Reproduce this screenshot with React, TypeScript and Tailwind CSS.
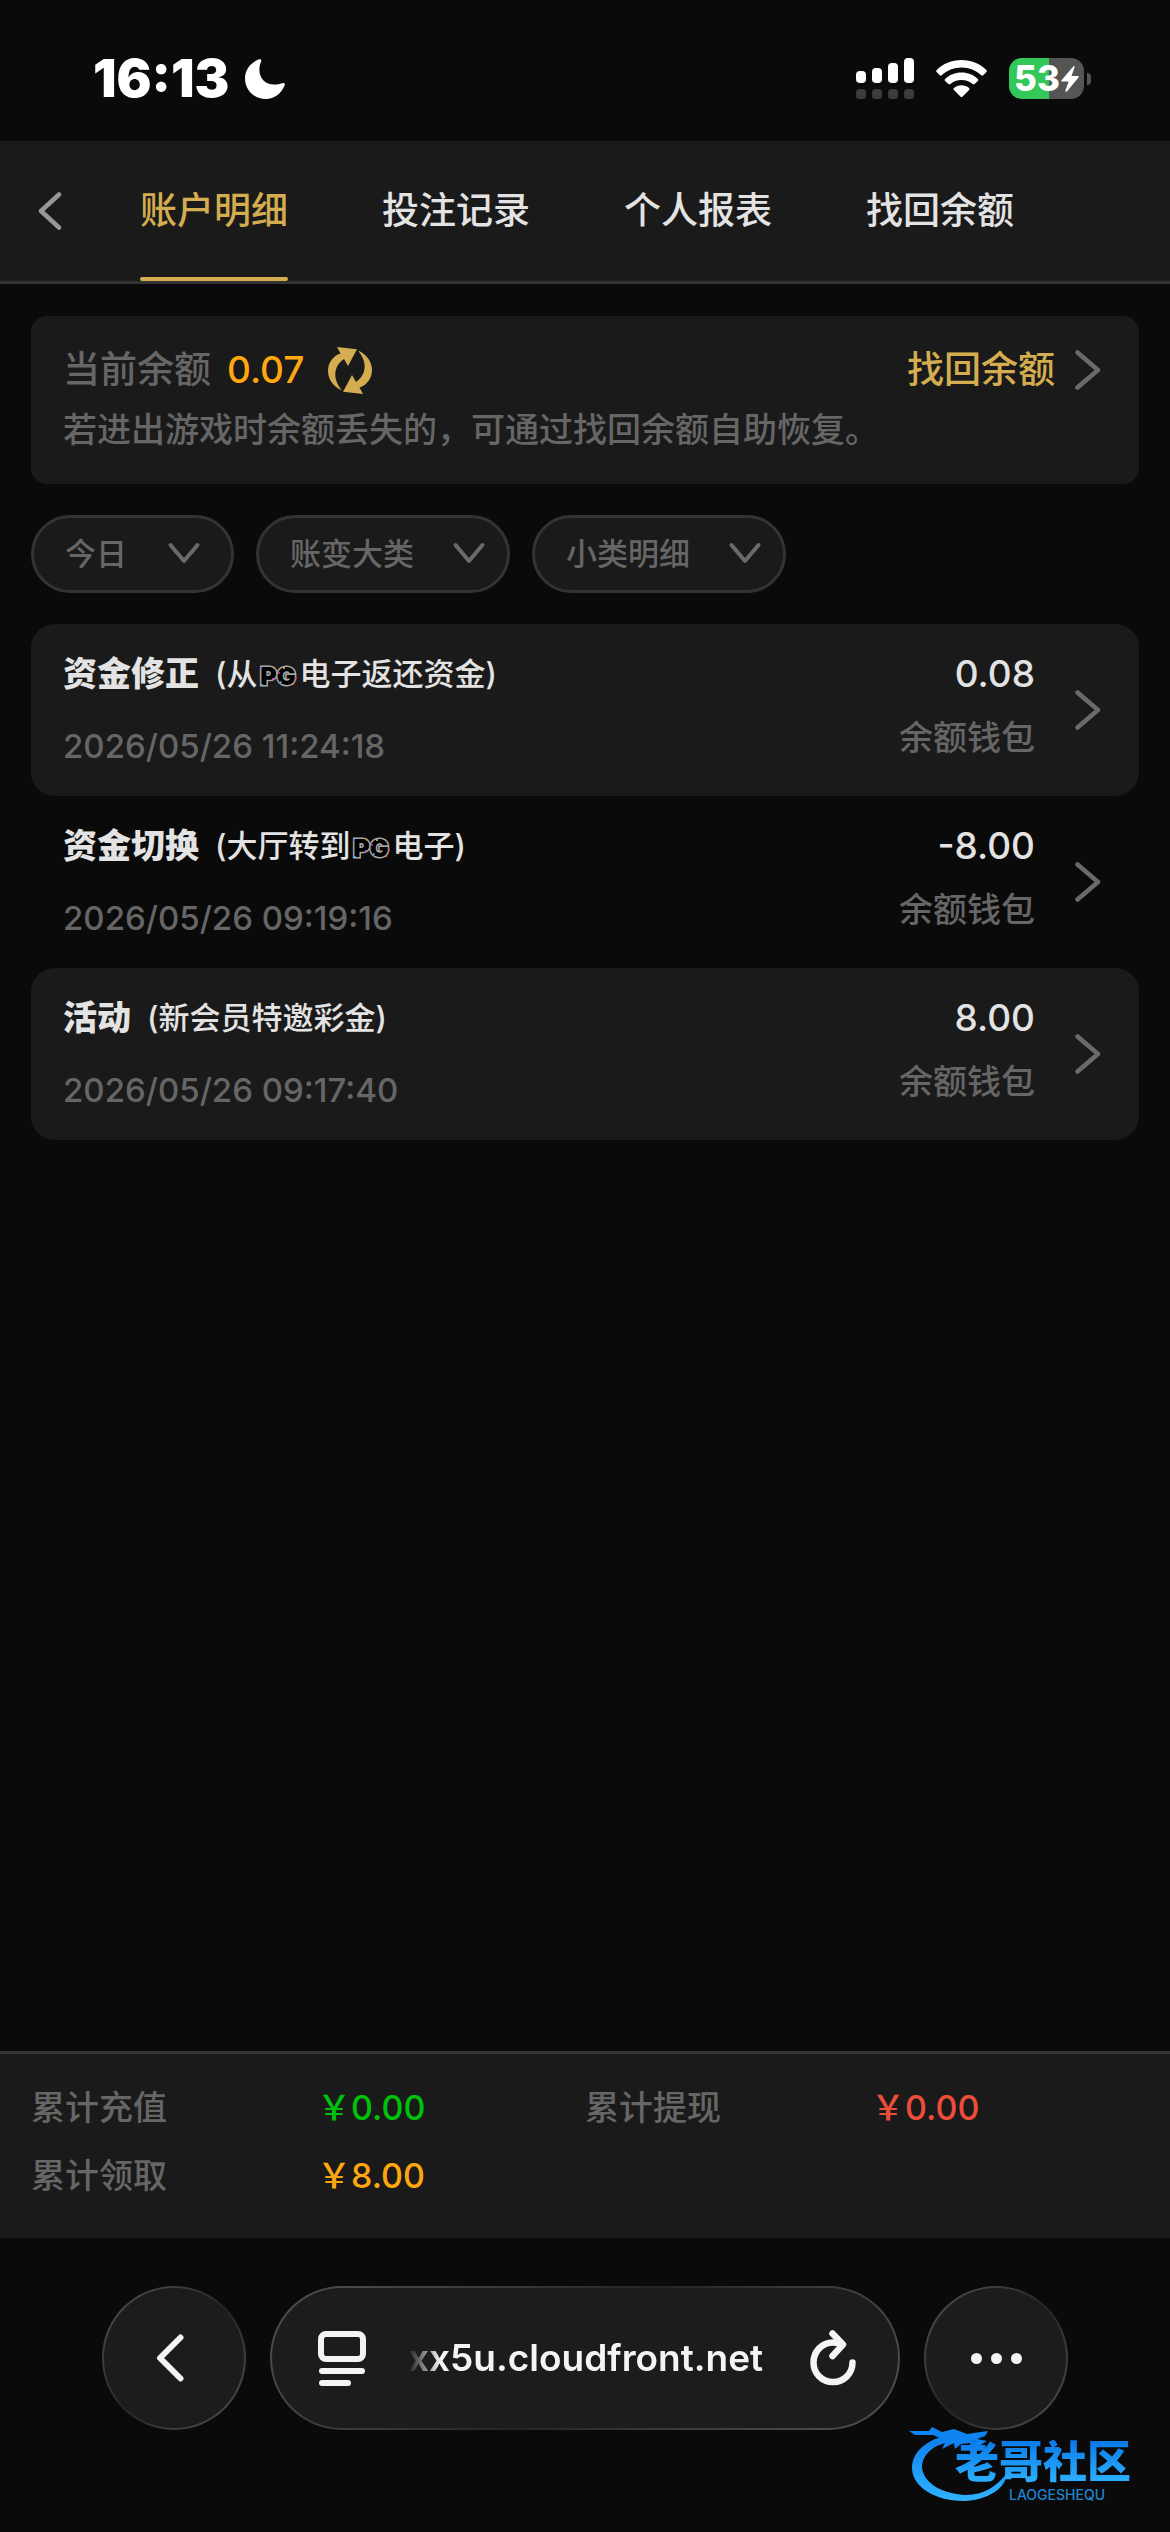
import { ReactNode } from "react";

const tabs = ["账户明细", "投注记录", "个人报表", "找回余额"];

const filters = [
    { label: "今日", box: "w-[203px]", arrow: "right-[32px]" },
    { label: "账变大类", box: "w-[254px]", arrow: "right-[23px]" },
    { label: "小类明细", box: "w-[254px]", arrow: "right-[23px]" },
];

const records = [
    {
        title: "资金修正",
        note: <>(从<PgMark />电子返还资金)</>,
        time: "2026/05/26 11:24:18",
        amount: "0.08",
    },
    {
        title: "资金切换",
        note: <>(大厅转到<PgMark />电子)</>,
        time: "2026/05/26 09:19:16",
        amount: "-8.00",
    },
    {
        title: "活动",
        note: <>(新会员特邀彩金)</>,
        time: "2026/05/26 09:17:40",
        amount: "8.00",
    },
];

const totals = [
    { label: "累计充值", value: "￥0.00", color: "text-[#00c20a]" },
    { label: "累计提现", value: "￥0.00", color: "text-[#ef4d3c]" },
    { label: "累计领取", value: "￥8.00", color: "text-[#ffa70f]" },
];

function PgMark() {
    return (
        <svg viewBox="0 0 42 32" className="inline-block h-8 w-[42px] overflow-visible align-[-7px]" role="img" aria-label="PG">
            <text
                x="21"
                y="25"
                textAnchor="middle"
                fontSize="25"
                fontWeight="900"
                fill="#000"
                stroke="#a8a8a8"
                strokeWidth="3"
                paintOrder="stroke"
                className="font-['Inter',sans-serif]"
            >
                PG
            </text>
            <circle cx="4" cy="8" r="1" fill="#8b4dff" />
            <circle cx="17" cy="8" r="1" fill="#ff7a2e" />
            <circle cx="16" cy="19" r="1" fill="#d94df0" />
            <circle cx="5" cy="25" r="1" fill="#39c8ff" />
            <circle cx="27" cy="8" r="1" fill="#ffc23a" />
            <circle cx="22" cy="13" r="1" fill="#f0308a" />
            <circle cx="24" cy="22" r="1" fill="#3a9dff" />
            <circle cx="39" cy="18" r="1" fill="#ff3a3a" />
            <circle cx="36" cy="24" r="1" fill="#ff7a2e" />
        </svg>
    );
}

function ChevronRight() {
    return (
        <svg viewBox="0 0 40 40" className="h-10 w-10 shrink-0" fill="none" stroke="#6a6a6a" strokeWidth="4.5" strokeLinecap="round" strokeLinejoin="round">
            <path d="M10.500 2.500L31 20L10.500 37.500" />
        </svg>
    );
}

function StatusBar() {
    return (
        <div className="flex h-[141px] items-center justify-between pt-4 pr-[79px] pl-[93px] text-white">
            <div className="flex items-center gap-4">
                <span className="text-[52px] leading-none font-black">16:13</span>
                <svg viewBox="0 0 40 40" className="h-10 w-10" fill="currentColor">
                    <path d="M13.500 0.600C15.500 -0.300 16.800 0.700 16.100 2.600C14.900 5.300 14.400 8 14.400 11C14.400 19.500 20.500 25.500 29 25.500C32 25.500 34.700 25 37.300 24.200C39.300 23.600 40.400 24.800 39.600 26.600C36.300 34.500 29.500 40 20.800 40C9 40 0 31 0 19.600C0 10.800 5.600 3.700 13.500 0.600Z" />
                </svg>
            </div>

            <div className="flex items-center">
                <svg viewBox="0 0 58 42" className="h-[42px] w-[58px]">
                    <g fill="#fff">
                        <rect x="0" y="13" width="10" height="12" rx="4" />
                        <rect x="16" y="10" width="10" height="15" rx="4" />
                        <rect x="32" y="5" width="10" height="20" rx="4" />
                        <rect x="48" y="0" width="10" height="25" rx="4" />
                    </g>
                    <g fill="#3b3b3b">
                        <rect x="0" y="31" width="10" height="10" rx="3.500" />
                        <rect x="16" y="31" width="10" height="10" rx="3.500" />
                        <rect x="32" y="31" width="10" height="10" rx="3.500" />
                        <rect x="48" y="31" width="10" height="10" rx="3.500" />
                    </g>
                </svg>
                <svg viewBox="0 0 51 37" className="ml-[22px] h-[37px] w-[51px]" fill="#fff">
                    <path d="M25.500 0C35.500 0 44 3.800 50.300 9.900C51 10.600 51 11.400 50.400 12L47.200 15.200C46.600 15.800 45.800 15.800 45.200 15.200C40 10.400 33.200 7.400 25.500 7.400S11 10.400 5.800 15.200C5.200 15.800 4.400 15.800 3.800 15.200L0.600 12C0 11.400 0 10.600 0.700 9.900C7 3.800 15.500 0 25.500 0Z" />
                    <path d="M25.500 12.600C32 12.600 37.600 15 41.800 18.900C42.500 19.500 42.500 20.300 41.900 20.900L38.600 24.100C38 24.700 37.300 24.700 36.600 24.100C33.600 21.500 29.800 20 25.500 20S17.400 21.500 14.400 24.100C13.700 24.700 13 24.700 12.400 24.100L9.100 20.900C8.500 20.300 8.500 19.500 9.200 18.900C13.400 15 19 12.600 25.500 12.600Z" />
                    <path d="M25.500 25.300C28.400 25.300 31 26.300 33 27.900C33.700 28.500 33.700 29.200 33.100 29.900L26.600 36.400C25.900 37.100 25.100 37.100 24.400 36.400L17.900 29.900C17.300 29.200 17.300 28.500 18 27.900C20 26.300 22.600 25.300 25.500 25.300Z" />
                </svg>
                <div className="ml-[22px] flex h-[41px] w-[75px] items-center justify-center gap-px rounded-[13px] bg-linear-to-r from-[#34c759] from-54% to-[#555] to-54%">
                    <span className="text-[35px] leading-none font-extrabold">53</span>
                    <svg viewBox="0 0 18 26" className="h-[26px] w-[18px]" fill="#fff">
                        <path d="M12.300 0.500L0.500 14.200C0 15 0.300 15.600 1.100 15.600H7.600L4.400 24.600C4 25.800 5.100 26.300 5.900 25.400L17.500 11.400C18 10.700 17.700 10.100 16.900 10.100H10.500L13.600 1.300C14 0.200 13 -0.300 12.300 0.500Z" />
                    </svg>
                </div>
                <div className="ml-[3px] h-[12px] w-1 rounded-r-full bg-[#555]" />
            </div>
        </div>
    );
}

function GlassPill({ className, children }: { className: string; children: ReactNode }) {
    return (
        <div
            className={`${className} flex h-[144px] items-center rounded-full border-2 border-transparent [background:linear-gradient(#1c1c1c,#1c1c1c)_padding-box,linear-gradient(135deg,#505050,#3a3a3a_30%,#242424_50%,#3a3a3a_70%,#505050)_border-box]`}
        >
            {children}
        </div>
    );
}

function BrowserBar() {
    return (
        <div className="flex gap-6 px-[102px] pt-12 pb-[102px] text-[#f4f4f4]">
            <GlassPill className="w-[144px] shrink-0">
                <button aria-label="后退" className="flex h-full w-full items-center justify-center pr-2">
                    <svg viewBox="0 0 28 48" className="h-12 w-7" fill="none" stroke="currentColor" strokeWidth="6" strokeLinecap="round" strokeLinejoin="round">
                        <path d="M24.500 3.500L4 24L24.500 44.500" />
                    </svg>
                </button>
            </GlassPill>

            <GlassPill className="min-w-0 flex-1 gap-[42px] pr-[42px] pl-[46px]">
                <button aria-label="页面菜单" className="shrink-0">
                    <svg viewBox="0 0 48 56" className="h-14 w-12" fill="none" stroke="currentColor" strokeWidth="6" strokeLinecap="round">
                        <rect x="3" y="4" width="42" height="25" rx="5" />
                        <path d="M4 41H44" />
                        <path d="M4 53H30" />
                    </svg>
                </button>
                <input
                    readOnly
                    aria-label="地址"
                    defaultValue="xx5u.cloudfront.net"
                    className="min-w-0 flex-1 bg-transparent text-[37px] leading-[44px] font-semibold outline-none [mask-image:linear-gradient(to_right,transparent,#000_32px)]"
                />
                <button aria-label="刷新" className="shrink-0">
                    <svg viewBox="0 0 46 56" className="h-14 w-[46px]" fill="none" stroke="currentColor" strokeWidth="6.500" strokeLinecap="round" strokeLinejoin="round">
                        <path d="M32 14.500C29.500 13 26.500 12.500 23 12.500C12 12.500 3.500 21.500 3.500 32.500C3.500 43.500 12 52 23 52C34 52 42.500 43.500 42.500 32.500" />
                        <path d="M22.500 3.500L33 14.500L22.500 26" />
                    </svg>
                </button>
            </GlassPill>

            <GlassPill className="w-[144px] shrink-0">
                <button aria-label="更多" className="flex h-full w-full items-center justify-center gap-[9px]">
                    <span className="size-[11px] rounded-full bg-current" />
                    <span className="size-[11px] rounded-full bg-current" />
                    <span className="size-[11px] rounded-full bg-current" />
                </button>
            </GlassPill>
        </div>
    );
}

function CommunityBadge() {
    return (
        <div className="pointer-events-none absolute right-[14px] bottom-7 h-[78px] w-[247px]">
            <svg viewBox="0 0 100 78" className="absolute top-0 left-0 h-[78px] w-[100px]">
                <defs>
                    <linearGradient id="badge" x1="0" y1="0" x2="0" y2="1">
                        <stop offset="0" stopColor="#0d7df0" />
                        <stop offset="1" stopColor="#2fb4ff" />
                    </linearGradient>
                </defs>
                <path
                    fill="url(#badge)"
                    d="M40 9C18 13 3 26 3 42C3 60 25 75 55 75C78 74 97 63 98 47C88 60 75 69 57 69C32 68 13 56 13 40C14 28 25 18 42 16Z"
                />
                <path
                    fill="#0d84f2"
                    d="M0 5L20 5L23 1L33 6L45 3L58 8L79 5L76 10L68 13L78 15L70 20L62 17L52 18L46 23L45 17L33 23L37 15L24 9L6 9Z"
                />
            </svg>
            <div className="absolute top-[14px] left-[46px] flex flex-col gap-1">
                <span className="bg-linear-to-b from-[#0b78e8] to-[#2eb2ff] bg-clip-text text-[44px] leading-[44px] font-black whitespace-nowrap text-transparent">
                    老哥社区
                </span>
                <span className="pl-[54px] text-[14px] leading-[14px] text-[#1d86cf]">LAOGESHEQU</span>
            </div>
        </div>
    );
}

export default function App() {
    return (
        <div className="relative flex min-h-screen flex-col bg-[#0a0a0a] font-['Inter','Noto_Sans_CJK_SC',sans-serif] font-medium text-[#e3e3e3]">
            <StatusBar />

            <header className="flex h-[143px] border-b-3 border-[#333] bg-[#1a1a1a] pl-[38px]">
                <button aria-label="返回" className="w-[102px]">
                    <svg viewBox="0 0 24 38" className="h-[38px] w-6" fill="none" stroke="#979797" strokeWidth="4.500" strokeLinecap="round" strokeLinejoin="round">
                        <path d="M21 2.500L3 19L21 35.500" />
                    </svg>
                </button>
                <nav className="flex gap-[94px]">
                    {tabs.map((tab, i) => (
                        <button key={tab} className={`relative text-[37px] leading-[44px] ${i === 0 ? "text-[#d3ad4f]" : ""}`}>
                            {tab}
                            {i === 0 && <span className="absolute inset-x-0 bottom-0 h-1 rounded-full bg-[#d3ad4f]" />}
                        </button>
                    ))}
                </nav>
            </header>

            <main className="flex flex-1 flex-col gap-[31px] px-[31px] pt-8">
                {/* Balance */}
                <section className="flex flex-col gap-4 rounded-2xl bg-[#1a1a1a] p-8 text-[#666]">
                    <div className="flex h-[44px] items-center justify-between text-[37px] leading-[44px]">
                        <div className="flex items-center">
                            <span>当前余额</span>
                            <span className="ml-4 text-[#ffa70f]">0.07</span>
                            <button aria-label="刷新余额" className="ml-6">
                                <svg viewBox="0 0 44 47" className="h-[47px] w-[44px]" fill="#d3ad4f">
                                    <path d="M9 0L29 2.300L20 19L16 12C7 18 3 30 14 43.500C4 39 0 31 0 24C0 15.500 5 9 12.500 6.500Z" />
                                    <path d="M35 47L15 44.700L24 28L28 35C37 29 41 17 30 3.500C40 8 44 16 44 23C44 31.500 39 38 31.500 40.500Z" />
                                </svg>
                            </button>
                        </div>
                        <button className="flex items-center gap-3 text-[#d3ad4f]">
                            找回余额
                            <ChevronRight />
                        </button>
                    </div>
                    <p className="text-[34px] leading-[44px]">若进出游戏时余额丢失的，可通过找回余额自助恢复。</p>
                </section>

                {/* Filters */}
                <div className="flex gap-[22px]">
                    {filters.map((filter) => (
                        <div key={filter.label} className={`relative ${filter.box}`}>
                            <select
                                aria-label={filter.label}
                                className="h-[78px] w-full appearance-none rounded-full border-3 border-[#333] bg-[#1a1a1a] pl-[31px] text-[31px] text-[#666]"
                            >
                                <option>{filter.label}</option>
                            </select>
                            <svg
                                viewBox="0 0 36 24"
                                className={`pointer-events-none absolute top-[26px] h-6 w-9 ${filter.arrow}`}
                                fill="none"
                                stroke="#6a6a6a"
                                strokeWidth="4"
                                strokeLinecap="round"
                                strokeLinejoin="round"
                            >
                                <path d="M4.500 4L18 20L31.500 4" />
                            </svg>
                        </div>
                    ))}
                </div>

                {/* Records */}
                <ul>
                    {records.map((record) => (
                        <li key={record.time} className="rounded-3xl odd:bg-[#1a1a1a]">
                            <button className="flex w-full items-center gap-8 px-8 py-7 text-left">
                                <div className="flex flex-1 flex-col gap-7">
                                    <div className="flex h-[44px] gap-4 leading-[44px]">
                                        <span className="text-[34px] font-black">{record.title}</span>
                                        <span className="text-[31px]">{record.note}</span>
                                    </div>
                                    <span className="text-[33px] leading-[44px] text-[#666]">{record.time}</span>
                                </div>
                                <div className="flex flex-col gap-5 self-start text-right leading-[44px]">
                                    <span className="text-[37px]">{record.amount}</span>
                                    <span className="text-[34px] text-[#666]">余额钱包</span>
                                </div>
                                <ChevronRight />
                            </button>
                        </li>
                    ))}
                </ul>
            </main>

            <footer className="border-t-3 border-[#333] bg-[#1a1a1a] px-[31px] pt-8 pb-10">
                <dl className="grid grid-cols-2 gap-y-6 text-[34px] leading-[44px]">
                    {totals.map((total) => (
                        <div key={total.label} className="flex">
                            <dt className="w-[286px] text-[#666]">{total.label}</dt>
                            <dd className={total.color}>{total.value}</dd>
                        </div>
                    ))}
                </dl>
            </footer>

            <BrowserBar />
            <CommunityBadge />
        </div>
    );
}
